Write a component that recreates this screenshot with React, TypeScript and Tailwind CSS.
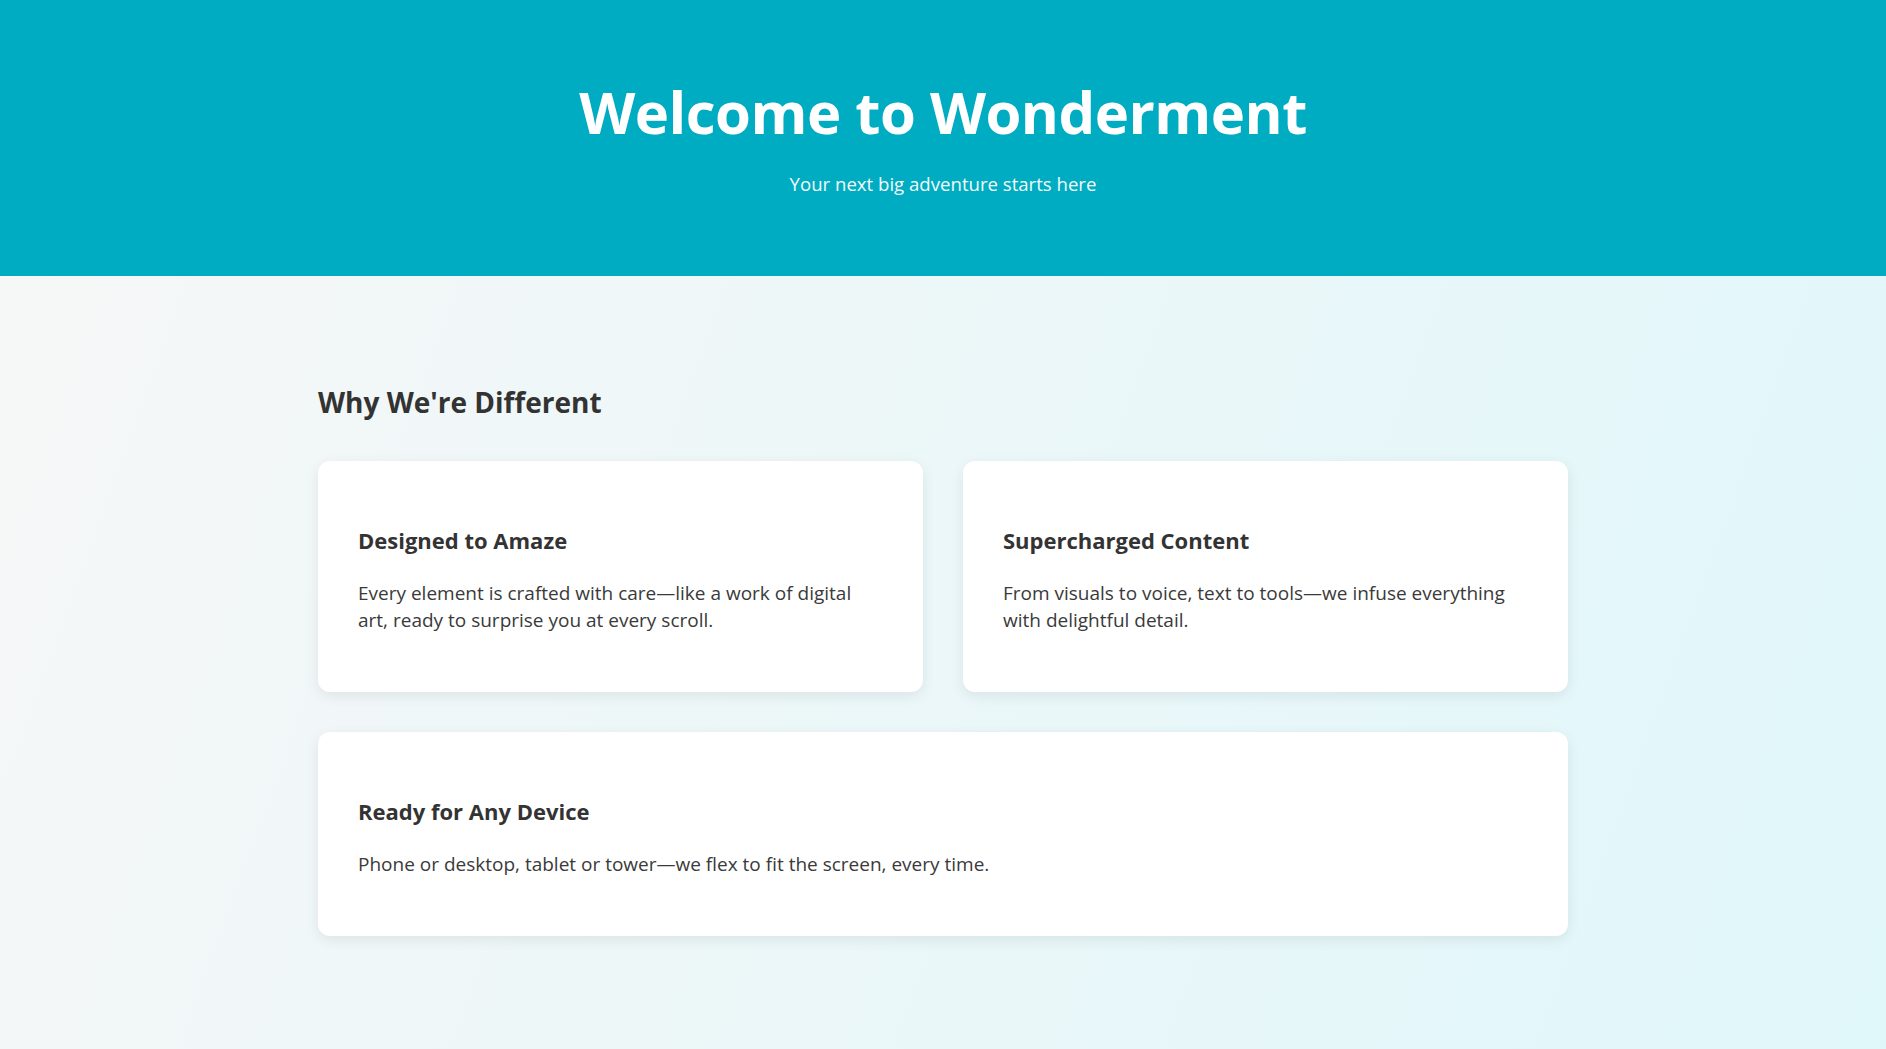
import React from "react";

const cards = [
  {
    title: "Designed to Amaze",
    text: "Every element is crafted with care—like a work of digital art, ready to surprise you at every scroll.",
  },
  {
    title: "Supercharged Content",
    text: "From visuals to voice, text to tools—we infuse everything with delightful detail.",
  },
];

function Card({ title, text, className = "" }: { title: string; text: string; className?: string }) {
  return (
    <div
      className={
        "bg-white rounded-xl shadow-[0_4px_14px_rgba(0,0,0,0.08)] pl-10 pr-[46px] pt-[66px] pb-[58px] " + className
      }
    >
      <h3 className="text-[22px] leading-[26px] font-bold text-[#333]">{title}</h3>
      <p className="mt-[27px] text-[19px] leading-[27px] text-[#3a3a3a]">{text}</p>
    </div>
  );
}

export default function App() {
  return (
    <div
      className="min-h-screen w-full bg-[linear-gradient(110deg,#f7f7f7,#e0f7fa)]"
      style={{ fontFamily: '"Open Sans", "Noto Sans", sans-serif' }}
    >
      <header className="h-[276px] bg-[#00acc1] flex flex-col items-center text-white">
        <h1 className="mt-[76px] text-[58px] leading-[72px] font-bold tracking-[-0.5px]">Welcome to Wonderment</h1>
        <p className="mt-[24px] text-[18.6px] leading-[24px] opacity-95">Your next big adventure starts here</p>
      </header>
      <main className="w-[1250px] mx-auto pt-[108px] pb-[113px]">
        <h2 className="text-[28px] leading-[36px] font-bold text-[#333]">Why We're Different</h2>
        <div className="mt-[41px] grid grid-cols-2 gap-10">
          {cards.map((c) => (
            <Card key={c.title} title={c.title} text={c.text} />
          ))}
          <Card
            className="col-span-2"
            title="Ready for Any Device"
            text="Phone or desktop, tablet or tower—we flex to fit the screen, every time."
          />
        </div>
      </main>
    </div>
  );
}
